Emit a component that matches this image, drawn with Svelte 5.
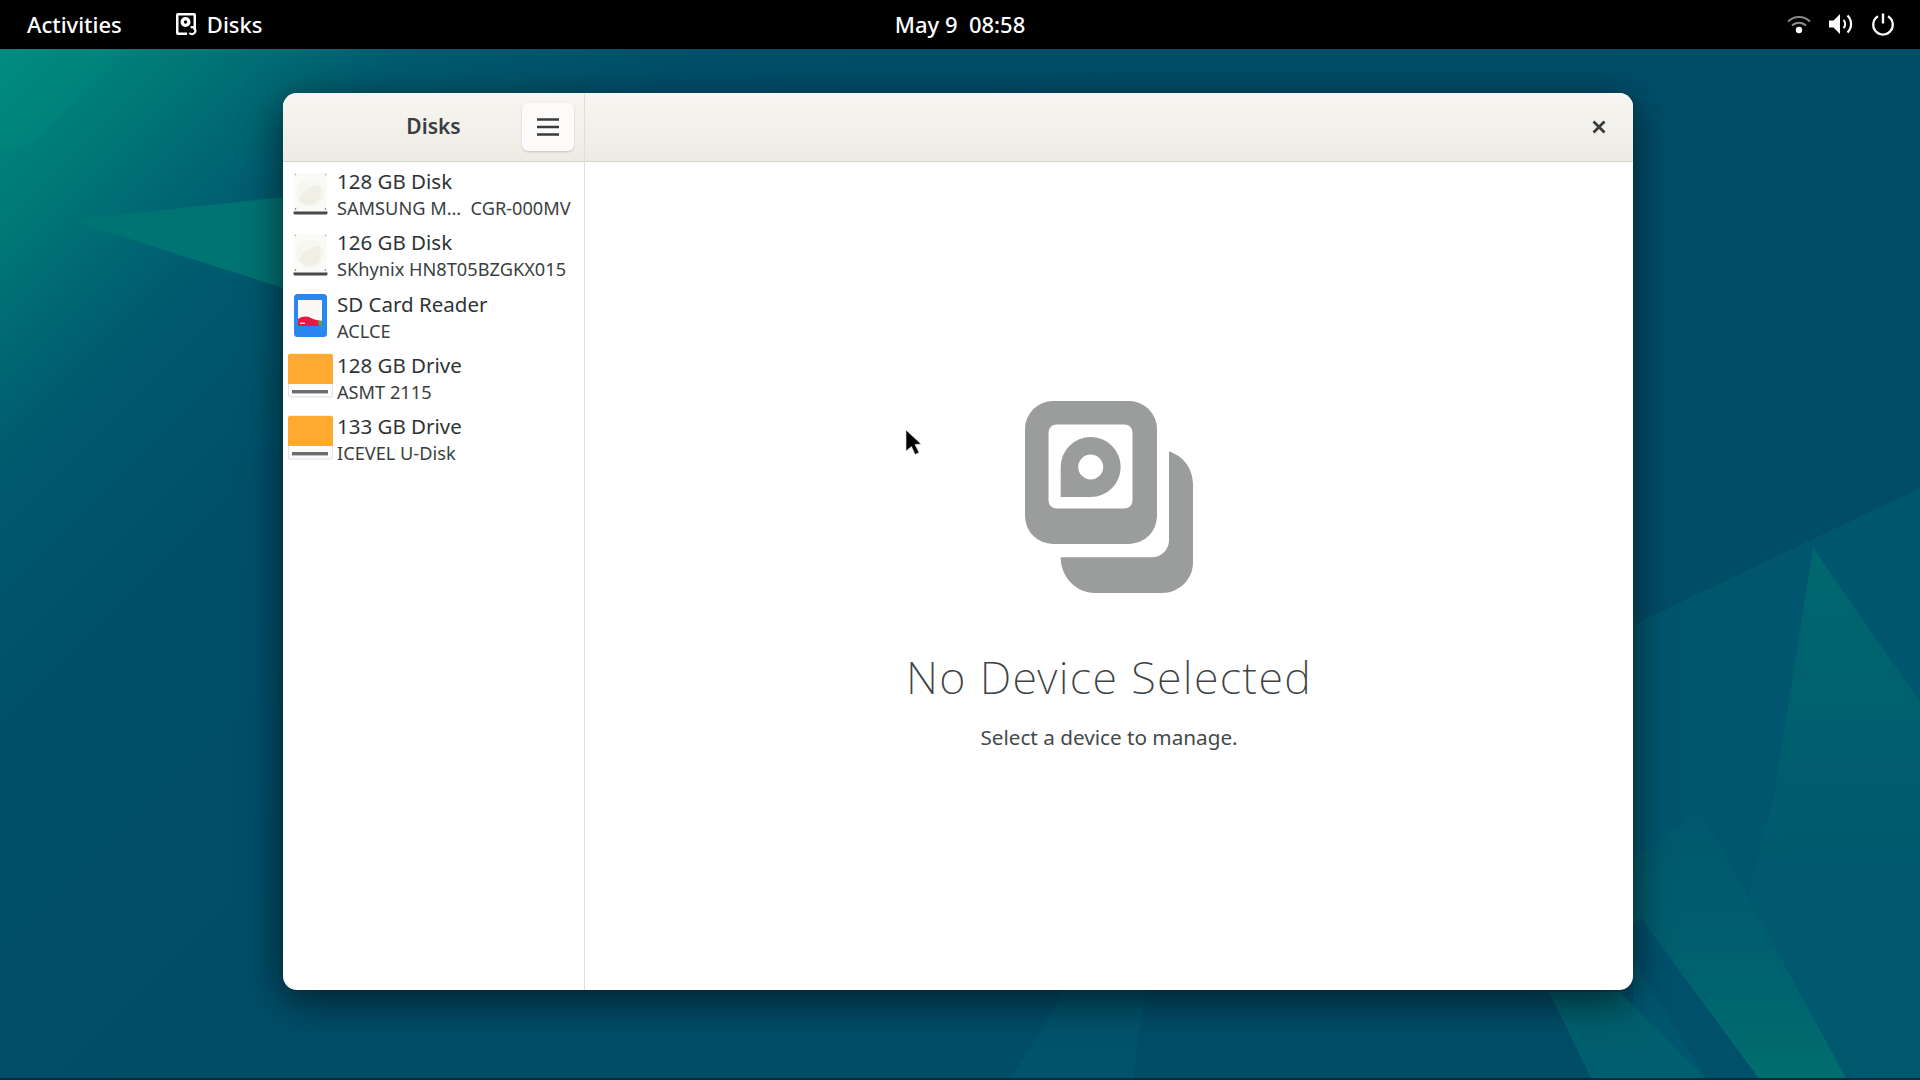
<script>
  const drives = [
    { kind: 'disk', title: '128 GB Disk', sub: 'SAMSUNG M…  CGR-000MV' },
    { kind: 'disk', title: '126 GB Disk', sub: 'SKhynix HN8T05BZGKX015' },
    { kind: 'sd', title: 'SD Card Reader', sub: 'ACLCE' },
    { kind: 'usb', title: '128 GB Drive', sub: 'ASMT 2115' },
    { kind: 'usb', title: '133 GB Drive', sub: 'ICEVEL U-Disk' }
  ]
</script>

<div class="screen">
  <svg class="wallpaper" viewBox="0 0 1920 1080" preserveAspectRatio="none" aria-hidden="true">
    <defs>
      <linearGradient id="base" gradientUnits="userSpaceOnUse" x1="0" y1="0" x2="600" y2="600">
        <stop offset="0" stop-color="#009080" />
        <stop offset="0.17" stop-color="#007c78" />
        <stop offset="0.38" stop-color="#005b6f" />
        <stop offset="0.62" stop-color="#004f6a" />
        <stop offset="1" stop-color="#004d68" />
      </linearGradient>
      <linearGradient id="fadeDown" x1="0" y1="0" x2="0" y2="1">
        <stop offset="0" stop-color="#00686f" />
        <stop offset="0.6" stop-color="#00596e" />
        <stop offset="1" stop-color="#00586e" />
      </linearGradient>
      <linearGradient id="fadeUp" x1="0" y1="1" x2="0" y2="0">
        <stop offset="0" stop-color="#006e6e" />
        <stop offset="0.5" stop-color="#005f6e" />
        <stop offset="1" stop-color="#00586e" />
      </linearGradient>
    </defs>
    <rect width="1920" height="1080" fill="url(#base)" />
    <polygon points="130,50 30,145 0,150 0,50" fill="#00a08a" opacity="0.12" />
    <polygon points="70,220 283,197 700,152 700,421" fill="#007373" />
    <polygon points="1633,625 1920,488 1920,1080 1633,1080" fill="#00566f" />
    <polygon points="1813,548 1920,702 1920,1080 1700,1080 1775,790" fill="url(#fadeDown)" />
    <polygon points="1633,860 1700,810 1847,1080 1760,1080 1620,917" fill="url(#fadeUp)" />
    <polygon points="1620,937 1640,917 1760,1080 1707,1080" fill="#00506c" />
    <polygon points="1549,992 1620,992 1707,1080 1592,1080" fill="#005f6e" />
    <polygon points="1065,990 1145,990 1133,1080 1010,1080" fill="#00566d" opacity="0.7" />
  </svg>

  <header class="topbar">
    <div class="left">
      <span class="item">Activities</span>
      <span class="item app">
        <svg width="24" height="26" viewBox="0 0 24 26" aria-hidden="true">
          <path d="M4 2h16a2 2 0 0 1 2 2v15h-2.500V4.500h-15v17H13V24H4a2 2 0 0 1-2-2V4a2 2 0 0 1 2-2z" fill="#fff" />
          <circle cx="11.500" cy="11" r="5" fill="#fff" />
          <circle cx="11.500" cy="11" r="1.700" fill="#000" />
          <path d="M16 15.500a4.500 4.500 0 1 1-1.500 7l1.700-1.300a2.300 2.300 0 1 0 .8-3.600z" fill="#fff" />
        </svg>
        Disks
      </span>
    </div>
    <div class="clock">May 9&nbsp; 08:58</div>
    <div class="tray">
      <svg width="24" height="24" viewBox="0 0 24 24" aria-hidden="true">
        <path d="M1 9.500a15.500 15.500 0 0 1 22 0" fill="none" stroke="#8a8a8a" stroke-width="2" />
        <path d="M5 13.500a10 10 0 0 1 14 0" fill="none" stroke="#8a8a8a" stroke-width="2" />
        <circle cx="12" cy="18" r="3.200" fill="#fff" />
      </svg>
      <svg width="26" height="24" viewBox="0 0 26 24" aria-hidden="true">
        <path d="M1 8.500h4.500L12 2v20l-6.500-6.500H1z" fill="#fff" />
        <path d="M15.500 8a5.500 5.500 0 0 1 0 8" fill="none" stroke="#fff" stroke-width="2" />
        <path d="M19.500 3.500a12 12 0 0 1 0 17" fill="none" stroke="#fff" stroke-width="2.200" />
      </svg>
      <svg width="24" height="24" viewBox="0 0 24 24" aria-hidden="true">
        <path d="M12 1.500v10" fill="none" stroke="#fff" stroke-width="2.400" />
        <path d="M7 4.300a9.800 9.800 0 1 0 10 0" fill="none" stroke="#fff" stroke-width="2.200" />
      </svg>
    </div>
  </header>

  <main class="desktop">
    <section class="window">
      <aside class="sidebar">
        <div class="side-head">
          <span class="side-title">Disks</span>
          <button class="menu" aria-label="Menu">
            <svg width="22" height="20" viewBox="0 0 22 20" aria-hidden="true">
              <path d="M0 2.500h22M0 10h22M0 17.500h22" stroke="#3a3a3a" stroke-width="2.400" fill="none" />
            </svg>
          </button>
        </div>
        <ul class="drives">
          {#each drives as d}
            <li class="drive">
              <svg class="drive-icon" width="45" height="48" viewBox="0 0 45 48" aria-hidden="true">
                {#if d.kind === 'disk'}
                  <rect x="6" y="3" width="33" height="39" rx="2" fill="#fbfaf7" />
                  <circle cx="22" cy="23" r="14" fill="#f7f7f1" />
                  <path d="M11 30c3-9 11-14 20-15 3 6 2 13-2 17-6 4-14 3-18-2z" fill="#efefe6" />
                  <circle cx="7.500" cy="4.500" r="0.800" fill="#aaa" />
                  <circle cx="37.500" cy="4.500" r="0.800" fill="#aaa" />
                  <circle cx="7.500" cy="39" r="0.800" fill="#666" />
                  <circle cx="37.500" cy="39" r="0.800" fill="#666" />
                  <path d="M5.500 41.500v1.500a1.500 1.500 0 0 0 1.500 1.500h31a1.500 1.500 0 0 0 1.500-1.500v-1.500z" fill="#45494b" />
                {:else if d.kind === 'sd'}
                  <rect x="6" y="2" width="33" height="43" rx="3.500" fill="#2a86f0" />
                  <rect x="10" y="8" width="24" height="26" fill="#fbf8f6" />
                  <path d="M10 27c5-3 9-3 13-1s7 2 11 3v5H10z" fill="#e8183e" />
                  <path d="M30 28.500l4 .5v5h-3z" fill="#5e9e4a" />
                  <path d="M12 30.500h5v1.500h-5z" fill="#f8c8d0" />
                {:else}
                  <rect x="0.400" y="1" width="44.200" height="43" rx="2" fill="#fbfbfa" stroke="#d6d6d6" stroke-width="0.800" />
                  <path d="M0 3a2 2 0 0 1 2-2h41a2 2 0 0 1 2 2v28H0z" fill="#ffa92e" />
                  <rect x="4" y="37" width="36" height="3.400" fill="#6b6d72" />
                {/if}
              </svg>
              <div class="drive-text">
                <div class="drive-title">{d.title}</div>
                <div class="drive-sub">{d.sub}</div>
              </div>
            </li>
          {/each}
        </ul>
      </aside>

      <div class="content">
        <div class="content-head">
          <svg width="16" height="16" viewBox="0 0 16 16" aria-label="Close">
            <path d="M2.500 2.500l11 11M13.500 2.500l-11 11" stroke="#3a3a3a" stroke-width="2.800" fill="none" />
          </svg>
        </div>
        <div class="empty">
          <svg class="empty-icon" width="168" height="192" viewBox="0 0 168 192" aria-hidden="true">
            <path
              fill="#9a9d9c"
              fill-rule="evenodd"
              d="M28 0h76a28 28 0 0 1 28 28v87a28 28 0 0 1-28 28H28a28 28 0 0 1-28-28V28A28 28 0 0 1 28 0zM31.500 23.500a8 8 0 0 0-8 8v68a8 8 0 0 0 8 8h68a8 8 0 0 0 8-8v-68a8 8 0 0 0-8-8zM65.700 36a30 30 0 0 1 0 60H35.700V66a30 30 0 0 1 30-30zM65.700 53.500a12.500 12.500 0 1 0 0 25a12.500 12.500 0 0 0 0-25z"
            />
            <path
              fill="#9a9d9c"
              d="M144 50.500c14 4 24 17 24 33v78c0 17-14 30.500-31 30.500H70c-19 0-34.300-16-34.300-35.700H127a17 17 0 0 0 17-17z"
            />
          </svg>
          <h1 class="empty-title">No Device Selected</h1>
          <p class="empty-sub">Select a device to manage.</p>
        </div>
      </div>
    </section>
  </main>

  <svg class="cursor" width="20" height="28" viewBox="0 0 20 28" aria-hidden="true">
    <path d="M2 1l15 14-6 .5 4 8-4 2-3.500-8L2 22z" fill="#000" stroke="#d8d8d8" stroke-width="0.700" />
  </svg>
</div>

<style>
  :global(body) {
    margin: 0;
    background: #004c68;
  }

  .screen {
    position: relative;
    width: 1920px;
    height: 1080px;
    overflow: hidden;
    display: flex;
    flex-direction: column;
    font-family: 'Noto Sans', 'Open Sans', sans-serif;
  }

  .wallpaper {
    position: absolute;
    inset: 0;
    width: 1920px;
    height: 1080px;
  }

  .topbar {
    position: relative;
    height: 49px;
    box-sizing: border-box;
    padding-bottom: 2px;
    flex: none;
    background: #000;
    color: #fff;
    display: grid;
    grid-template-columns: 1fr auto 1fr;
    align-items: center;
    font-size: 22px;
    font-weight: 500;
  }

  .left {
    display: flex;
    align-items: center;
    gap: 52px;
    padding-left: 27px;
  }

  .item {
    display: flex;
    align-items: center;
    gap: 9px;
  }

  .tray {
    display: flex;
    align-items: center;
    justify-content: flex-end;
    gap: 17px;
    padding-right: 25px;
  }

  .desktop {
    position: relative;
    flex: 1;
    padding: 44px 287px 0 283px;
    border-bottom: 2px solid #002f40;
  }

  .window {
    height: 897px;
    display: flex;
    border-radius: 14px;
    overflow: hidden;
    background: #fff;
    box-shadow: 0 10px 40px rgba(0, 0, 0, 0.6);
    color: #2e3436;
  }

  .sidebar {
    width: 301px;
    flex: none;
    border-right: 1px solid #dfdedb;
    display: flex;
    flex-direction: column;
  }

  .side-head,
  .content-head {
    height: 69px;
    flex: none;
    box-sizing: border-box;
    background: linear-gradient(#f7f6f2, #eeebe4);
    border-bottom: 1px solid #d8d3cb;
    display: flex;
    align-items: center;
  }

  .side-head {
    position: relative;
    justify-content: center;
    padding-bottom: 2px;
  }

  .side-title {
    font-size: 21px;
    font-weight: 600;
    color: #3a3e40;
  }

  .menu {
    position: absolute;
    right: 10px;
    top: 10px;
    width: 52px;
    height: 48px;
    padding: 0;
    border: 0;
    border-radius: 6px;
    background: #fcfbf9;
    box-shadow: 0 1px 2px rgba(0, 0, 0, 0.18);
    display: flex;
    align-items: center;
    justify-content: center;
  }

  .drives {
    list-style: none;
    margin: 0;
    padding: 1px 0 0;
  }

  .drive {
    height: 61.25px;
    display: flex;
    align-items: center;
    padding-left: 5px;
    gap: 4px;
  }

  .drive-icon {
    flex: none;
  }

  .drive-text {
    min-width: 0;
    padding-top: 2px;
  }

  .drive-title {
    font-size: 20.500px;
    line-height: 27px;
    color: #2e3436;
    white-space: pre;
  }

  .drive-sub {
    margin-top: 1px;
    font-size: 18.200px;
    line-height: 25px;
    color: #3a3f41;
    white-space: pre;
  }

  .content {
    flex: 1;
    display: flex;
    flex-direction: column;
  }

  .content-head {
    justify-content: flex-end;
    padding-right: 26px;
  }

  .empty {
    flex: 1;
    display: flex;
    flex-direction: column;
    align-items: center;
    padding-top: 239px;
  }

  .empty-icon {
    display: block;
  }

  .empty-title {
    margin: 50px 0 0;
    font-size: 45px;
    line-height: 68px;
    font-weight: 200;
    letter-spacing: 1.300px;
    color: #3d4345;
  }

  .empty-sub {
    margin: 11px 0 0;
    font-size: 20.700px;
    line-height: 30px;
    color: #44494b;
  }

  .cursor {
    position: absolute;
    left: 904px;
    top: 429px;
  }
</style>
